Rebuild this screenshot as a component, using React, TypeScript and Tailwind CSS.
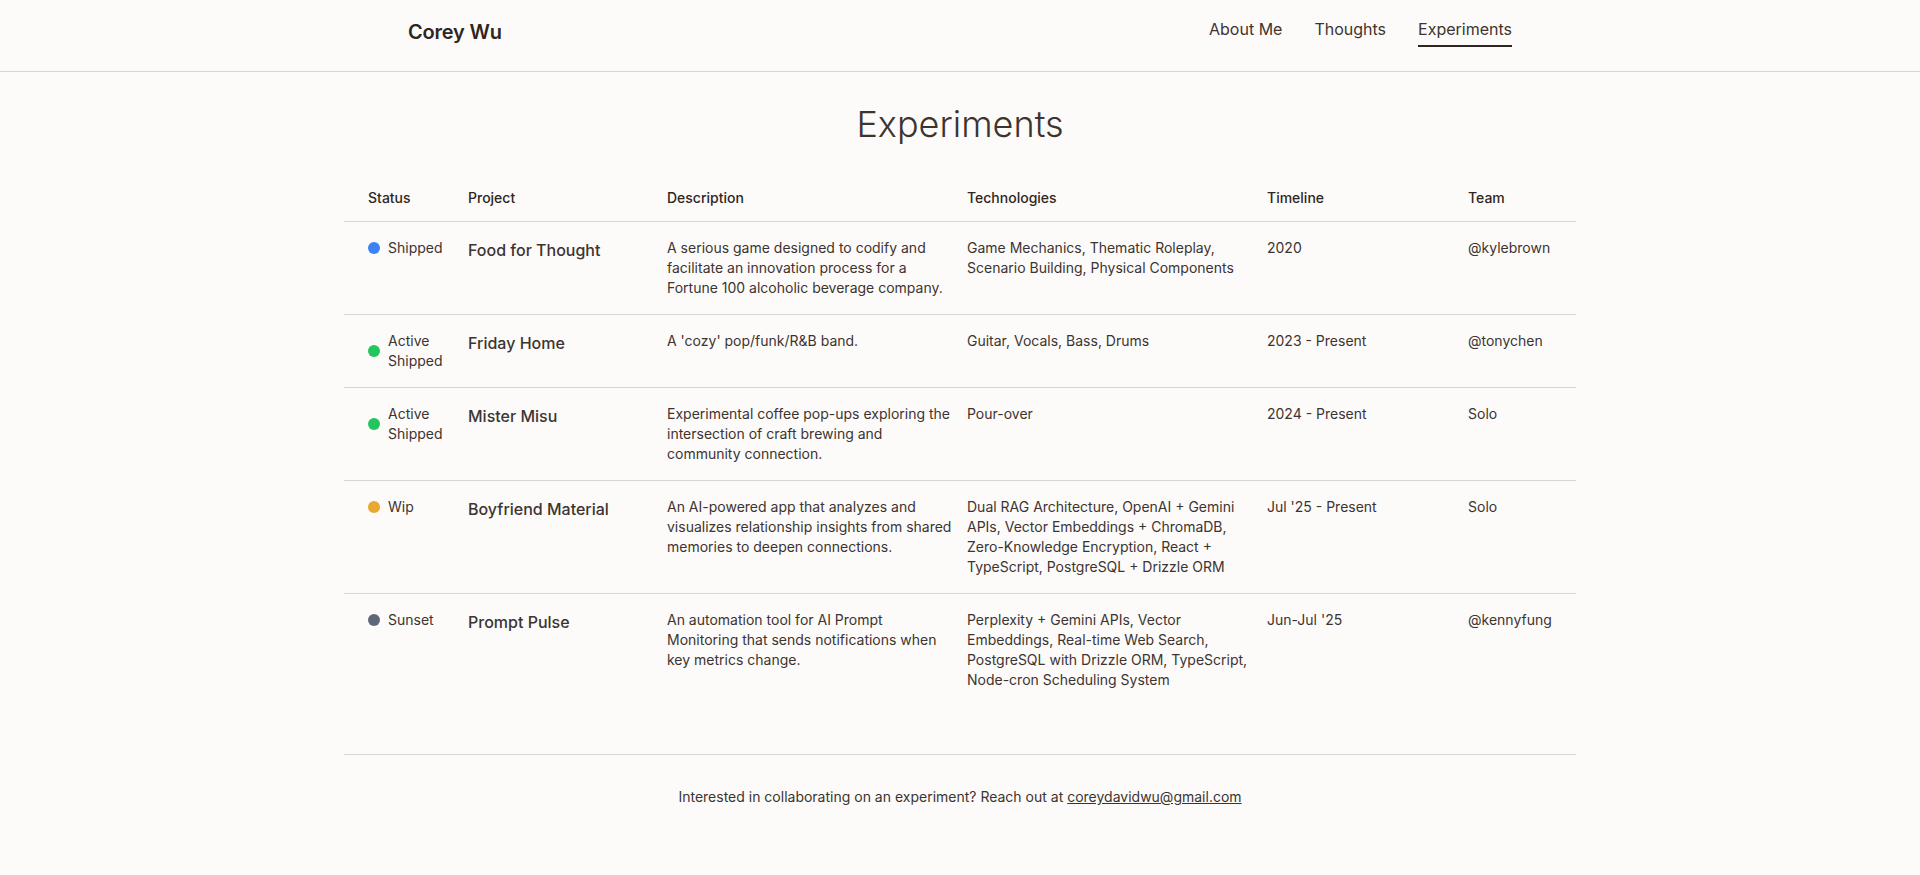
import React from "react";

type Row = {
  status: string[];
  dot: string;
  project: string;
  description: string;
  tech: string;
  timeline: string;
  team: string;
};

const rows: Row[] = [
  {
    status: ["Shipped"],
    dot: "bg-[#3b82f6]",
    project: "Food for Thought",
    description:
      "A serious game designed to codify and facilitate an innovation process for a Fortune 100 alcoholic beverage company.",
    tech: "Game Mechanics, Thematic Roleplay, Scenario Building, Physical Components",
    timeline: "2020",
    team: "@kylebrown",
  },
  {
    status: ["Active", "Shipped"],
    dot: "bg-[#22c55e]",
    project: "Friday Home",
    description: "A 'cozy' pop/funk/R&B band.",
    tech: "Guitar, Vocals, Bass, Drums",
    timeline: "2023 - Present",
    team: "@tonychen",
  },
  {
    status: ["Active", "Shipped"],
    dot: "bg-[#22c55e]",
    project: "Mister Misu",
    description:
      "Experimental coffee pop-ups exploring the intersection of craft brewing and community connection.",
    tech: "Pour-over",
    timeline: "2024 - Present",
    team: "Solo",
  },
  {
    status: ["Wip"],
    dot: "bg-[#e9a830]",
    project: "Boyfriend Material",
    description:
      "An AI-powered app that analyzes and visualizes relationship insights from shared memories to deepen connections.",
    tech: "Dual RAG Architecture, OpenAI + Gemini APIs, Vector Embeddings + ChromaDB, Zero-Knowledge Encryption, React + TypeScript, PostgreSQL + Drizzle ORM",
    timeline: "Jul '25 - Present",
    team: "Solo",
  },
  {
    status: ["Sunset"],
    dot: "bg-[#5f6878]",
    project: "Prompt Pulse",
    description:
      "An automation tool for AI Prompt Monitoring that sends notifications when key metrics change.",
    tech: "Perplexity + Gemini APIs, Vector Embeddings, Real-time Web Search, PostgreSQL with Drizzle ORM, TypeScript, Node-cron Scheduling System",
    timeline: "Jun-Jul '25",
    team: "@kennyfung",
  },
];

const grid = "grid grid-cols-[124px_199px_300px_300px_201px_1fr]";

export default function App() {
  return (
    <div
      className="min-h-screen bg-[#fcfbfa] text-[#3d3430]"
      style={{ fontFamily: "Inter, 'Noto Sans', sans-serif" }}
    >
      <header className="border-b border-[#d8d5d2]">
        <div className="mx-auto flex h-[71px] max-w-6xl items-start justify-between px-6">
          <div className="pt-[18px] text-[20px] leading-7 font-semibold tracking-[-0.01em] text-[#2f2622]">
            Corey Wu
          </div>
          <nav className="flex items-start gap-8 pt-[17px] text-[16px] leading-6">
            <a className="border-b-2 border-transparent pb-1 text-[#3d3430]">About Me</a>
            <a className="border-b-2 border-transparent pb-1 text-[#3d3430]">Thoughts</a>
            <a className="border-b-2 border-[#2f2622] pb-1 text-[#3d3430]">Experiments</a>
          </nav>
        </div>
      </header>

      <main className="mx-auto max-w-7xl px-6 pt-8">
        <h1 className="mb-8 text-center text-[36px] leading-10 font-light text-[#3d3430]">Experiments</h1>

        <div className="text-sm">
          <div className={`${grid} border-b border-[#d8d5d2] font-medium text-[#2f2622]`}>
            <div className="pt-3 pb-[13px] pl-6 pr-3">Status</div>
            <div className="pt-3 pb-[13px] pr-3">Project</div>
            <div className="pt-3 pb-[13px] pr-3">Description</div>
            <div className="pt-3 pb-[13px] pr-3">Technologies</div>
            <div className="pt-3 pb-[13px] pr-3">Timeline</div>
            <div className="pt-3 pb-[13px] pr-3">Team</div>
          </div>
          {rows.map((r, i) => (
            <div
              key={r.project}
              className={`${grid} ${i < rows.length - 1 ? "border-b border-[#d8d5d2]" : ""}`}
            >
              <div className="py-4 pl-6 pr-3">
                <div className="flex items-center gap-2">
                  <span className={`h-3 w-3 shrink-0 rounded-full ${r.dot}`} />
                  <span className="leading-5">
                    {r.status.map((s) => (
                      <span key={s} className="block">
                        {s}
                      </span>
                    ))}
                  </span>
                </div>
              </div>
              <div className="py-4 pr-3 text-base font-medium leading-6">{r.project}</div>
              <div className="py-4 pr-3 leading-5">{r.description}</div>
              <div className="py-4 pr-3 leading-5">{r.tech}</div>
              <div className="py-4 pr-3 leading-5">{r.timeline}</div>
              <div className="py-4 pr-3 leading-5">{r.team}</div>
            </div>
          ))}
        </div>

        <footer className="mt-12 border-t border-[#d8d5d2] py-8 text-center text-sm">
          Interested in collaborating on an experiment? Reach out at{" "}
          <a className="underline">coreydavidwu@gmail.com</a>
        </footer>
      </main>
    </div>
  );
}
